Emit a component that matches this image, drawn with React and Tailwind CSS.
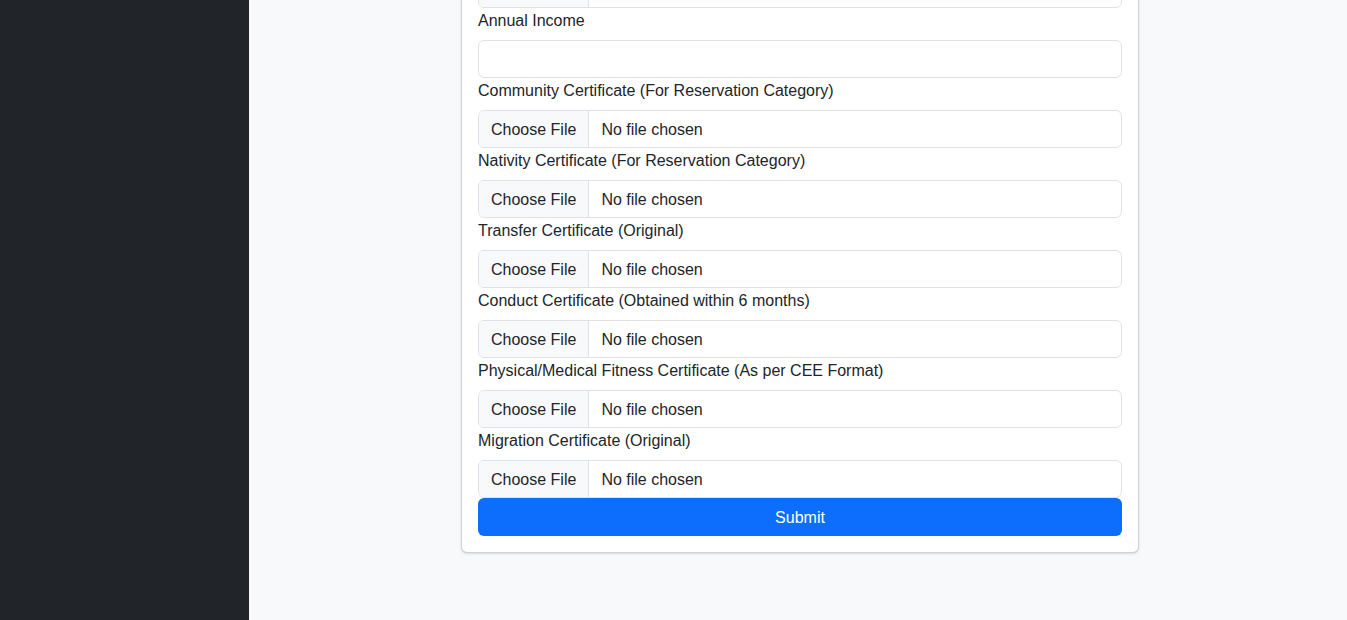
const fileFields = [
  "Passport Size Photograph",
  null, // annual income text input goes here
  "Community Certificate (For Reservation Category)",
  "Nativity Certificate (For Reservation Category)",
  "Transfer Certificate (Original)",
  "Conduct Certificate (Obtained within 6 months)",
  "Physical/Medical Fitness Certificate (As per CEE Format)",
  "Migration Certificate (Original)",
];

function Label({ children }) {
  return (
    <label className="mb-2 block h-6 pt-px leading-6 text-[#212529]">{children}</label>
  );
}

function FileField({ label }) {
  return (
    <div>
      <Label>{label}</Label>
      <div className="flex h-[38px] w-full overflow-hidden rounded-md border border-[#dee2e6] bg-white">
        <span className="flex items-center border-r border-[#dee2e6] bg-[#f8f9fa] px-3 pt-px text-[#212529]">
          Choose File
        </span>
        <span className="flex items-center pl-3 pt-px text-[#212529]">No file chosen</span>
      </div>
    </div>
  );
}

export default function App() {
  return (
    <div
      className="flex h-screen overflow-hidden bg-[#f8f9fa] text-base"
      style={{ fontFamily: '"Segoe UI", "Liberation Sans", Arial, sans-serif' }}
    >
      <aside className="w-[249px] shrink-0 bg-[#212529]" />
      <main className="flex-1">
        <div className="-mt-[79px] ml-[212px] w-[678px] rounded-md border border-black/[0.175] bg-white p-4 shadow-sm">
          <form>
            {fileFields.map((f, i) =>
              f === null ? (
                <div key={i}>
                  <Label>Annual Income</Label>
                  <input
                    type="text"
                    className="block h-[38px] w-full rounded-md border border-[#dee2e6] bg-white px-3 outline-none"
                  />
                </div>
              ) : (
                <FileField key={i} label={f} />
              )
            )}
            <button
              type="submit"
              className="h-[38px] w-full rounded-md bg-[#0d6efd] pt-px text-white"
            >
              Submit
            </button>
          </form>
        </div>
      </main>
    </div>
  );
}
